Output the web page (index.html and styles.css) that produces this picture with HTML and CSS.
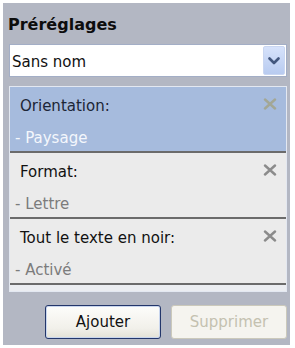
FILE: index.html
```html
<!DOCTYPE html>
<html lang="fr">
<head>
<meta charset="utf-8">
<link rel="stylesheet" href="styles.css">
</head>
<body>
<div class="panel">
  <div class="title">Préréglages</div>
  <div class="combo">
    <span class="combo-text">Sans nom</span>
    <span class="combo-btn">
      <svg width="12" height="8" viewBox="0 0 12 8"><path d="M1.5 1.5 L6 6 L10.5 1.5" fill="none" stroke="#43577e" stroke-width="2.6" stroke-linecap="round" stroke-linejoin="round"/></svg>
    </span>
  </div>
  <div class="list">
    <div class="item selected">
      <div class="line1"><span>Orientation:</span><svg class="x" width="14" height="12" viewBox="0 0 14 12"><path d="M2 1.5 L12 10.5 M12 1.5 L2 10.5" stroke="currentColor" stroke-width="2.4" stroke-linecap="round"/></svg></div>
      <div class="line2">- Paysage</div>
    </div>
    <div class="sep"></div>
    <div class="item">
      <div class="line1"><span>Format:</span><svg class="x" width="14" height="12" viewBox="0 0 14 12"><path d="M2 1.5 L12 10.5 M12 1.5 L2 10.5" stroke="currentColor" stroke-width="2.4" stroke-linecap="round"/></svg></div>
      <div class="line2">- Lettre</div>
    </div>
    <div class="sep"></div>
    <div class="item">
      <div class="line1"><span>Tout le texte en noir:</span><svg class="x" width="14" height="12" viewBox="0 0 14 12"><path d="M2 1.5 L12 10.5 M12 1.5 L2 10.5" stroke="currentColor" stroke-width="2.4" stroke-linecap="round"/></svg></div>
      <div class="line2">- Activé</div>
    </div>
    <div class="sep"></div>
    <div class="filler"></div>
  </div>
  <div class="buttons">
    <button class="btn">Ajouter</button>
    <button class="btn disabled" disabled>Supprimer</button>
  </div>
</div>
</body>
</html>
```
FILE: styles.css
```css
html, body {
  margin: 0;
  padding: 0;
  background: #ffffff;
}
body {
  font-family: "DejaVu Sans", sans-serif;
  font-size: 15px;
  color: #111;
}
.panel {
  box-sizing: border-box;
  margin: 3px 5px 0 3px;
  width: 287px;
  height: 342px;
  background: #b3b7c3;
  padding: 12px 3px 0 6px;
  display: flex;
  flex-direction: column;
}
.title {
  font-weight: bold;
  font-size: 16px;
  line-height: 20px;
  margin-left: -1px;
  color: #0d0d0d;
}
.combo {
  margin-top: 9px;
  box-sizing: border-box;
  height: 33px;
  background: #fff;
  border: 1px solid #a3aec6;
  display: flex;
  align-items: center;
  justify-content: space-between;
  padding: 0 1px 0 2px;
}
.combo-text {
  line-height: 20px;
  margin-top: 2px;
}
.combo-btn {
  box-sizing: border-box;
  width: 22px;
  height: 29px;
  background: linear-gradient(#d6e2fb, #b8cbf0);
  border: 1px solid #c9d6f1;
  border-radius: 2px;
  display: flex;
  align-items: center;
  justify-content: center;
}
.list {
  margin-top: 9px;
  box-sizing: border-box;
  height: 206px;
  border: 1px solid #e3e8f1;
  background: #ebedf1;
  display: flex;
  flex-direction: column;
}
.item {
  box-sizing: border-box;
  height: 64px;
  padding-top: 6px;
  background: #ebebeb;
  display: flex;
  flex-direction: column;
  gap: 6px;
}
.item.selected {
  background: #a6bbdd;
}
.line1 {
  line-height: 26px;
  display: flex;
  justify-content: space-between;
  align-items: center;
  padding: 0 9px 0 10px;
  color: #111;
}
.line2 {
  line-height: 26px;
  padding-left: 5px;
  color: #7c7c7c;
}
.selected .line1 { color: #1c2536; }
.selected .line2 { color: #f4f7fc; }
.x {
  color: #8b8b8b;
  margin-top: -4px;
}
.selected .x { color: #a3a795; }
.sep {
  height: 2px;
  background: #6b6b6b;
}
.filler {
  flex: 1;
}
.buttons {
  margin-top: 13px;
  display: flex;
  justify-content: flex-end;
  gap: 10px;
}
.btn {
  box-sizing: border-box;
  width: 116px;
  height: 34px;
  font-family: "DejaVu Sans", sans-serif;
  font-size: 15px;
  color: #111;
  background: linear-gradient(#fdfdfb, #f1f0ea 70%, #e3e1d6);
  border: 1px solid #23366a;
  border-radius: 3px;
  box-shadow: inset 0 0 0 1px #c9d6ee;
  padding: 0;
}
.btn.disabled {
  color: #c4c1b0;
  background: #f5f4ef;
  border-color: #cbc9bb;
  box-shadow: none;
}
```
